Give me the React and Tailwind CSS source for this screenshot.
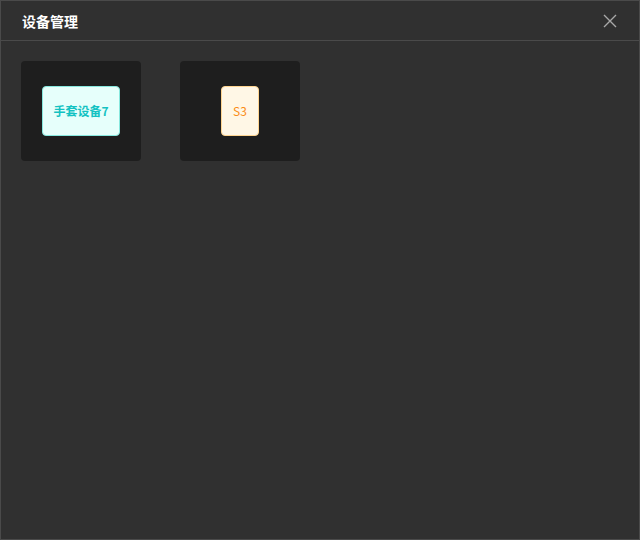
export default function App() {
  const devices = [
    { name: "手套设备7", kind: "glove" },
    { name: "S3", kind: "sensor" },
  ];

  return (
    <div
      className="w-[640px] h-[540px] bg-[#303030] border border-[#4a4a4a] flex flex-col"
      style={{ fontFamily: '"Noto Sans CJK SC", "Noto Sans", sans-serif' }}
    >
      <div className="h-[40px] shrink-0 flex items-center justify-between pl-[21px] pr-[21px] border-b border-[#4a4a4a]">
        <span className="text-[14px] font-bold text-white leading-none">设备管理</span>
        <button className="text-[#a8a8a8] w-[16px] h-[16px] flex items-center justify-center">
          <svg width="14" height="14" viewBox="0 0 14 14" fill="none">
            <path d="M1 1 L13 13 M13 1 L1 13" stroke="currentColor" strokeWidth="1.4" />
          </svg>
        </button>
      </div>

      <div className="flex flex-wrap gap-[39px] pl-[20px] pt-[20px]">
        {devices.map((d) => (
          <div
            key={d.name}
            className="w-[120px] h-[100px] rounded bg-[#1e1e1e] flex items-center justify-center"
          >
            {d.kind === "glove" ? (
              <div className="h-[50px] px-[10px] flex items-center rounded border border-[#87e8de] bg-[#e6fffb] text-[#13c2c2] text-[12px] font-bold">
                {d.name}
              </div>
            ) : (
              <div className="h-[50px] px-[11px] flex items-center rounded border border-[#ffd591] bg-[#fff7e6] text-[#fa8c16] text-[12px]">
                {d.name}
              </div>
            )}
          </div>
        ))}
      </div>
    </div>
  );
}
